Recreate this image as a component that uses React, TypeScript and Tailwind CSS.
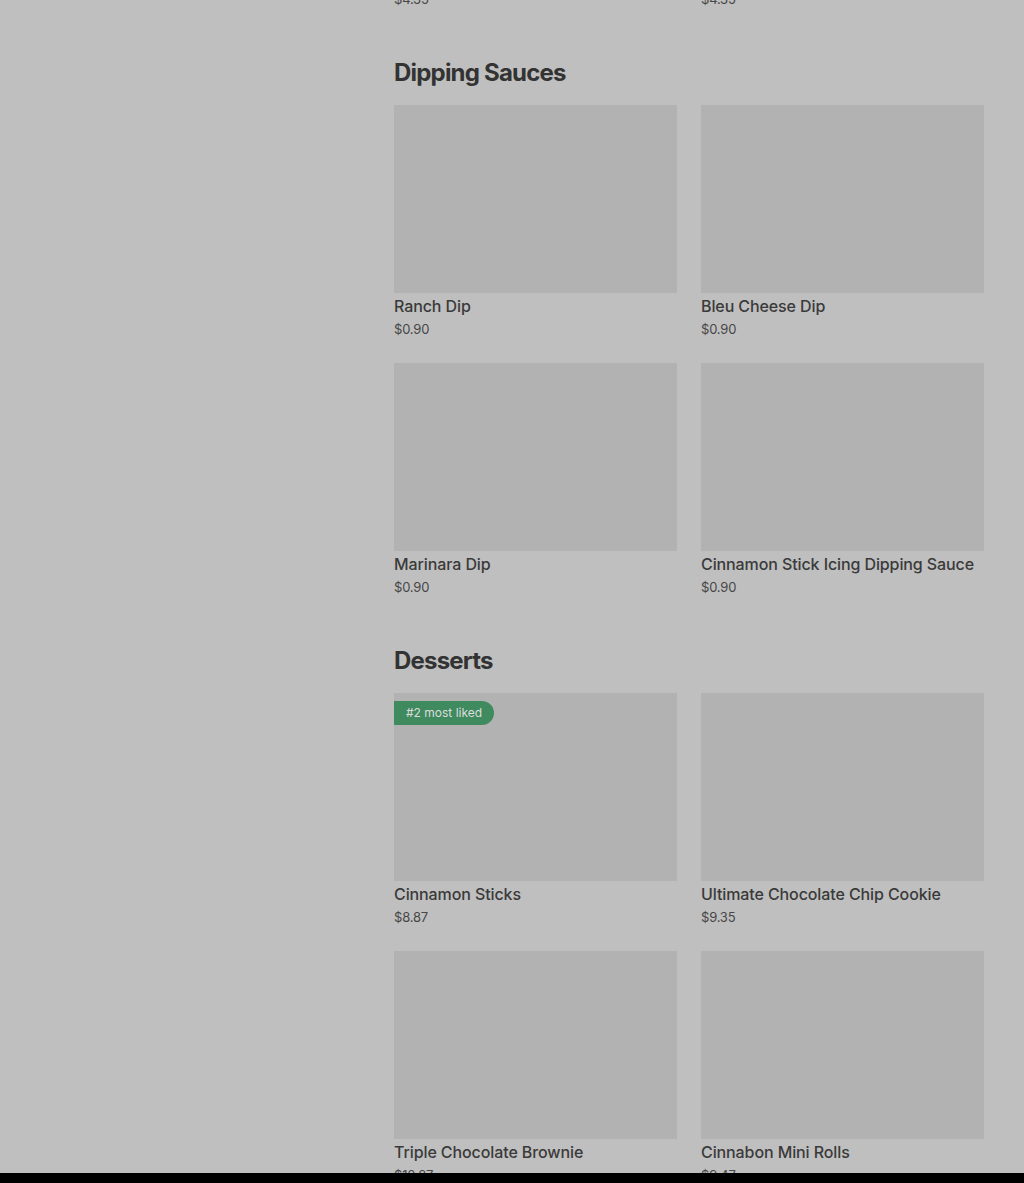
import React from "react";

type Item = { name: string; price: string; badge?: string };

const previous: Item[] = [
  { name: "Garlic Knots", price: "$4.35" },
  { name: "Breadsticks", price: "$4.35" },
];

const sections: { title: string; items: Item[] }[] = [
  {
    title: "Dipping Sauces",
    items: [
      { name: "Ranch Dip", price: "$0.90" },
      { name: "Bleu Cheese Dip", price: "$0.90" },
      { name: "Marinara Dip", price: "$0.90" },
      { name: "Cinnamon Stick Icing Dipping Sauce", price: "$0.90" },
    ],
  },
  {
    title: "Desserts",
    items: [
      { name: "Cinnamon Sticks", price: "$8.87", badge: "#2 most liked" },
      { name: "Ultimate Chocolate Chip Cookie", price: "$9.35" },
      { name: "Triple Chocolate Brownie", price: "$10.87" },
      { name: "Cinnabon Mini Rolls", price: "$9.47" },
    ],
  },
];

function MenuCard({ item }: { item: Item }) {
  return (
    <div className="flex flex-col">
      <div className="relative h-[188px] bg-[#b2b2b2]">
        {item.badge && (
          <span className="absolute left-0 top-2 h-6 pl-3 pr-3 flex items-center rounded-r-full bg-[#3f8a5f] text-[12px] text-[#dcdcdc]">
            {item.badge}
          </span>
        )}
      </div>
      <div className="mt-[1px] text-base leading-6 font-medium tracking-[-0.1px] text-[#3a3a3a]">
        {item.name}
      </div>
      <div className="mt-[1px] text-[13px] leading-5 tracking-[-0.2px] text-[#474747]">
        {item.price}
      </div>
    </div>
  );
}

export default function App() {
  return (
    <div
      className="min-h-[1183px] bg-[#bfbfbf] overflow-hidden"
      style={{ fontFamily: "Inter, 'Liberation Sans', sans-serif" }}
    >
      <div className="ml-[394px] mr-[40px] -mt-[225px]">
        {/* tail of the previous category */}
        <div className="grid grid-cols-2 gap-x-6">
          {previous.map((item) => (
            <MenuCard key={item.name} item={item} />
          ))}
        </div>

        {sections.map((section) => (
          <section key={section.title} className="mt-12">
            <h2 className="text-2xl leading-8 font-bold tracking-[-0.8px] text-[#333333] mb-4">
              {section.title}
            </h2>
            <div className="grid grid-cols-2 gap-x-6 gap-y-6">
              {section.items.map((item) => (
                <MenuCard key={item.name} item={item} />
              ))}
            </div>
          </section>
        ))}
      </div>

      {/* bottom edge of the sheet */}
      <div className="fixed bottom-0 left-0 right-0 h-[10px] bg-black" />
    </div>
  );
}
